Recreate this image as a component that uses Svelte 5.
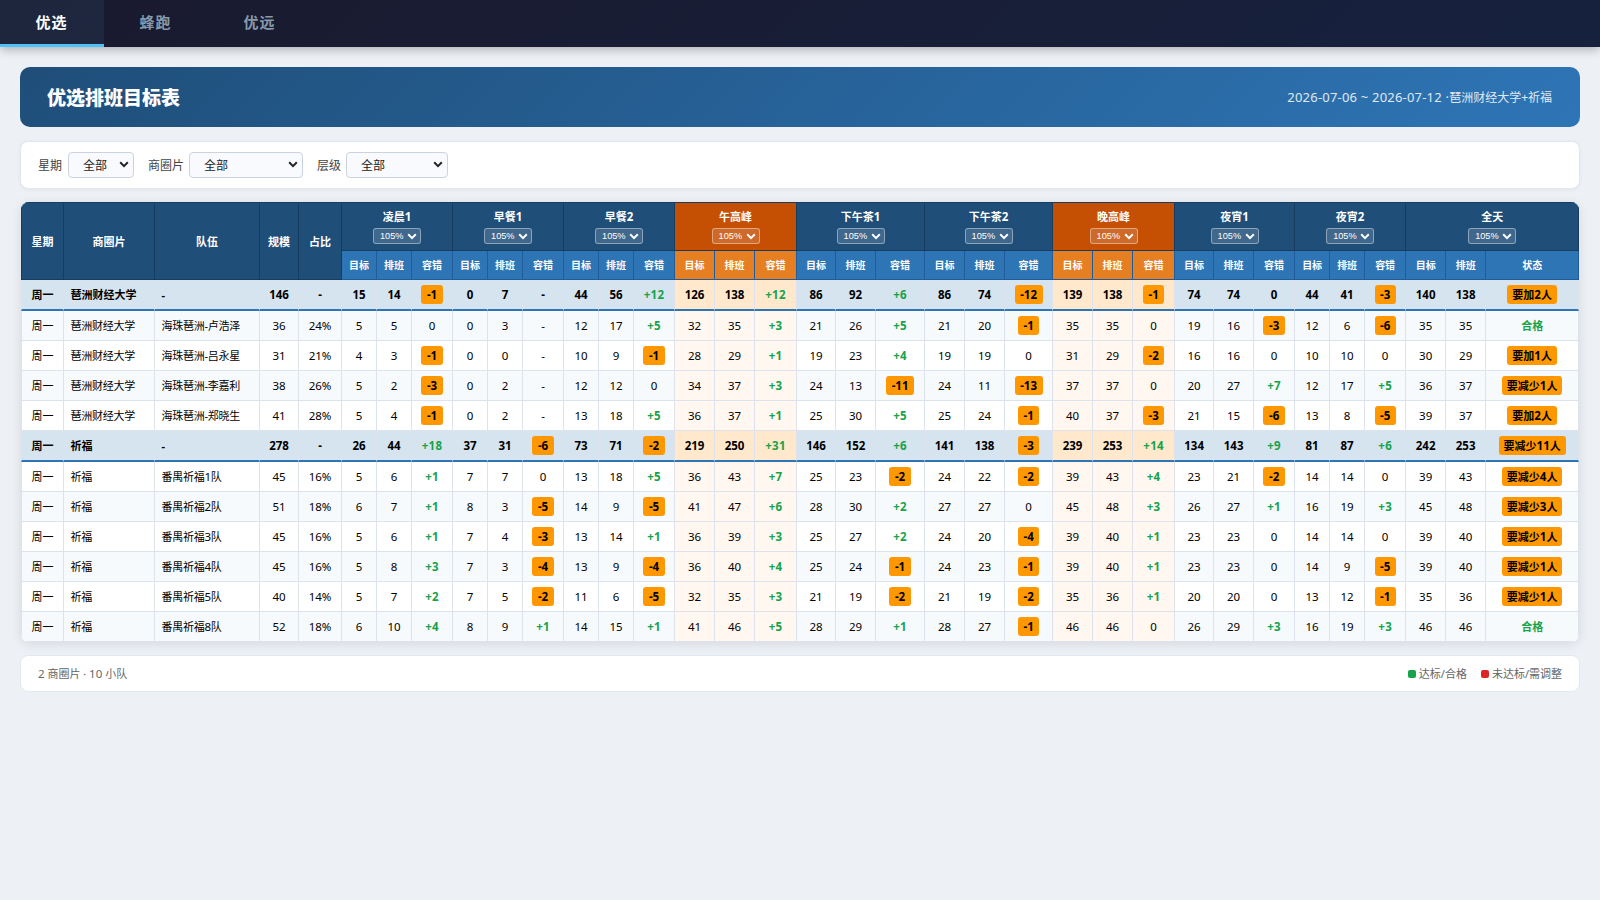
<script>
  const tabs = ['优选', '蜂跑', '优远'];

  const filters = [
    { label: '星期', size: 'sm' },
    { label: '商圈片', size: 'lg' },
    { label: '层级', size: 'md' },
  ];

  const periods = [
    { name: '凌晨1' },
    { name: '早餐1' },
    { name: '早餐2' },
    { name: '午高峰', peak: true },
    { name: '下午茶1' },
    { name: '下午茶2' },
    { name: '晚高峰', peak: true },
    { name: '夜宵1' },
    { name: '夜宵2' },
    { name: '全天', total: true },
  ];

  const widths = [
    42, 91, 105, 39, 43, 35, 35, 41, 35, 35, 41, 35, 35, 41, 40, 40, 42, 39, 40, 49,
    40, 40, 48, 40, 40, 42, 39, 40, 41, 35, 35, 41, 40, 40, 93,
  ];

  // area | team | size | share | target,shift,diff per period | status
  const source = `
琶洲财经大学|-|146|-|15,14,-1 0,7,- 44,56,+12 126,138,+12 86,92,+6 86,74,-12 139,138,-1 74,74,0 44,41,-3 140,138|要加2人
琶洲财经大学|海珠琶洲-卢浩泽|36|24%|5,5,0 0,3,- 12,17,+5 32,35,+3 21,26,+5 21,20,-1 35,35,0 19,16,-3 12,6,-6 35,35|合格
琶洲财经大学|海珠琶洲-吕永星|31|21%|4,3,-1 0,0,- 10,9,-1 28,29,+1 19,23,+4 19,19,0 31,29,-2 16,16,0 10,10,0 30,29|要加1人
琶洲财经大学|海珠琶洲-李嘉利|38|26%|5,2,-3 0,2,- 12,12,0 34,37,+3 24,13,-11 24,11,-13 37,37,0 20,27,+7 12,17,+5 36,37|要减少1人
琶洲财经大学|海珠琶洲-郑晓生|41|28%|5,4,-1 0,2,- 13,18,+5 36,37,+1 25,30,+5 25,24,-1 40,37,-3 21,15,-6 13,8,-5 39,37|要加2人
祈福|-|278|-|26,44,+18 37,31,-6 73,71,-2 219,250,+31 146,152,+6 141,138,-3 239,253,+14 134,143,+9 81,87,+6 242,253|要减少11人
祈福|番禺祈福1队|45|16%|5,6,+1 7,7,0 13,18,+5 36,43,+7 25,23,-2 24,22,-2 39,43,+4 23,21,-2 14,14,0 39,43|要减少4人
祈福|番禺祈福2队|51|18%|6,7,+1 8,3,-5 14,9,-5 41,47,+6 28,30,+2 27,27,0 45,48,+3 26,27,+1 16,19,+3 45,48|要减少3人
祈福|番禺祈福3队|45|16%|5,6,+1 7,4,-3 13,14,+1 36,39,+3 25,27,+2 24,20,-4 39,40,+1 23,23,0 14,14,0 39,40|要减少1人
祈福|番禺祈福4队|45|16%|5,8,+3 7,3,-4 13,9,-4 36,40,+4 25,24,-1 24,23,-1 39,40,+1 23,23,0 14,9,-5 39,40|要减少1人
祈福|番禺祈福5队|40|14%|5,7,+2 7,5,-2 11,6,-5 32,35,+3 21,19,-2 21,19,-2 35,36,+1 20,20,0 13,12,-1 35,36|要减少1人
祈福|番禺祈福8队|52|18%|6,10,+4 8,9,+1 14,15,+1 41,46,+5 28,29,+1 28,27,-1 46,46,0 26,29,+3 16,19,+3 46,46|合格`;

  const rows = source
    .trim()
    .split('\n')
    .map((line) => {
      const [area, team, size, share, values, status] = line.split('|');
      const cells = values.split(' ').flatMap((group, i) =>
        group.split(',').map((value, j) => ({ value, diff: j === 2, peak: periods[i].peak }))
      );
      return { area, team, size, share, cells, status, summary: team === '-' };
    });

  function tone({ value, diff }) {
    if (!diff || value === '-') return '';
    if (value[0] === '+') return 'good';
    return value[0] === '-' ? 'warn' : '';
  }
</script>

{#snippet mixed(text)}
  {#each text.split(/([\d%]+)/) as part}{#if /\d/.test(part)}<span class="num">{part}</span>{:else}{part}{/if}{/each}
{/snippet}

{#snippet chevron()}
  <svg class="chevron" viewBox="0 0 10 7" aria-hidden="true">
    <path d="M1.2 1.3 5 5.1 8.8 1.3" fill="none" stroke="currentColor" stroke-width="2" />
  </svg>
{/snippet}

<nav class="tabs">
  {#each tabs as tab, i}
    <button class="tab" class:active={i === 0}>{tab}</button>
  {/each}
</nav>

<main>
  <header class="hero">
    <h1>优选排班目标表</h1>
    <p><span class="date">2026-07-06 ~ 2026-07-12 · </span>琶洲财经大学+祈福</p>
  </header>

  <section class="filters">
    {#each filters as { label, size }}
      <div class="filter">
        <span>{label}</span>
        <button class="select {size}">全部{@render chevron()}</button>
      </div>
    {/each}
  </section>

  <div class="table-wrap">
    <table>
      <colgroup>
        {#each widths as width, i}
          <col style:width="{i === 0 ? width + 1 : width}px" />
        {/each}
      </colgroup>
      <thead>
        <tr class="head">
          {#each ['星期', '商圈片', '队伍', '规模', '占比'] as title}
            <th class="tall" rowspan="2">{title}</th>
          {/each}
          {#each periods as { name, peak }}
            <th colspan="3" class:peak>
              <div class="period">
                {@render mixed(name)}
              </div>
              <button class="rate">105%{@render chevron()}</button>
            </th>
          {/each}
        </tr>
        <tr class="sub">
          {#each periods as { peak, total }}
            <th class:peak>目标</th>
            <th class:peak>排班</th>
            <th class:peak>{total ? '状态' : '容错'}</th>
          {/each}
        </tr>
      </thead>
      <tbody>
        {#each rows as row}
          <tr class:summary={row.summary}>
            <td>周一</td>
            <td class="left">{row.area}</td>
            <td class="left">{@render mixed(row.team)}</td>
            <td><span class="num">{row.size}</span></td>
            <td><span class="num">{row.share}</span></td>
            {#each row.cells as cell}
              <td class:peak={cell.peak}><span class="num {tone(cell)}">{cell.value}</span></td>
            {/each}
            <td>
              <span class={row.status === '合格' ? 'good' : 'warn'}>{@render mixed(row.status)}</span>
            </td>
          </tr>
        {/each}
      </tbody>
    </table>
  </div>

  <footer>
    <span>{@render mixed('2 商圈片 · 10 小队')}</span>
    <div class="legend">
      <span><i class="ok"></i>达标/合格</span>
      <span><i class="bad"></i>未达标/需调整</span>
    </div>
  </footer>
</main>

<style>
  :global(body) {
    background: #edf0f5;
    font-family: 'Noto Sans', 'Noto Sans CJK SC', sans-serif;
    font-size: 12px;
    color: #000;
  }

  button {
    font-family: inherit;
    margin: 0;
  }

  .tabs {
    display: flex;
    height: 47px;
    background: linear-gradient(135deg, #1a1a2e, #16213e);
    box-shadow: 0 2px 10px rgba(0, 0, 0, 0.3);
  }

  .tab {
    box-sizing: border-box;
    width: 104px;
    padding: 0 1px 2px 0;
    border: 0;
    border-bottom: 3px solid transparent;
    background: none;
    color: #8899aa;
    font-size: 15px;
    font-weight: 600;
    letter-spacing: 1px;
  }

  .tab.active {
    color: #fff;
    background: rgba(79, 195, 247, 0.08);
    border-bottom-color: #4fc3f7;
  }

  main {
    padding: 20px;
  }

  .hero {
    display: flex;
    align-items: center;
    justify-content: space-between;
    height: 60px;
    padding: 0 28px 0 27px;
    border-radius: 10px;
    background: linear-gradient(135deg, #1f4e79, #2e75b6);
    color: #fff;
  }

  h1 {
    margin: 0;
    font-size: 19px;
    font-weight: 900;
  }

  .hero p {
    margin: 0;
    opacity: 0.85;
  }

  .date {
    font-size: 13px;
    letter-spacing: 0.2px;
    white-space: pre;
  }

  .filters,
  footer {
    display: flex;
    align-items: center;
    box-sizing: border-box;
    background: #fff;
    border: 1px solid #e2e8f0;
    border-radius: 8px;
    padding: 0 17px;
  }

  .filters {
    height: 48px;
    margin-top: 14px;
    gap: 14px;
    color: #444;
    box-shadow: 0 1px 4px rgba(0, 0, 0, 0.05);
  }

  .filter {
    display: flex;
    align-items: center;
    gap: 5px;
  }

  .filter:first-child {
    gap: 6px;
  }

  .select {
    display: flex;
    align-items: center;
    justify-content: space-between;
    box-sizing: border-box;
    height: 26px;
    padding: 0 4px 1px 14px;
    border: 1px solid #ccd3e0;
    border-radius: 4px;
    background: #f9fafd;
    color: #222;
    font-size: 12px;
  }

  .select.sm {
    width: 66px;
  }

  .select.lg {
    width: 114px;
  }

  .select.md {
    width: 102px;
  }

  .chevron {
    width: 10px;
    height: 7px;
    flex-shrink: 0;
  }

  .table-wrap {
    width: 1558px;
    margin: 13px 0 0 1px;
    overflow: hidden;
    border-radius: 8px;
    box-shadow: 0 2px 12px rgba(0, 0, 0, 0.1);
  }

  table {
    width: 1558px;
    table-layout: fixed;
    border-collapse: separate;
    border-spacing: 0;
    background: #fff;
    font-size: 11px;
    line-height: 16px;
  }

  th,
  td {
    box-sizing: border-box;
    padding: 0;
    text-align: center;
    white-space: nowrap;
    border: 0 solid #dde3ec;
    border-width: 0 1px 1px 0;
  }

  tr > :first-child:not(.sub > *) {
    border-left-width: 1px;
  }

  .head th {
    height: 49px;
    border-color: #163d5f;
    border-top-width: 1px;
    background: #1f4e79;
    color: #fff;
  }

  .head th.tall {
    padding-top: 2px;
  }

  .head th.peak {
    background: #c55004;
  }

  .period {
    height: 16px;
    margin-bottom: 3px;
  }

  .rate {
    display: inline-flex;
    align-items: center;
    justify-content: space-between;
    box-sizing: border-box;
    width: 48px;
    height: 16px;
    padding: 0 3px 0 6px;
    border: 1px solid rgba(255, 255, 255, 0.4);
    border-radius: 3px;
    background: rgba(255, 255, 255, 0.15);
    color: #fff;
    font: 9.2px 'Liberation Sans', sans-serif;
    vertical-align: top;
  }

  .sub th {
    height: 29px;
    border-color: #1f5c99;
    background: #2e75b6;
    color: #fff;
    font-size: 10px;
  }

  .sub th.peak {
    background: #e67e22;
  }

  td {
    height: 30px;
  }

  tbody tr:nth-child(even) td {
    background: #f7fafd;
  }

  tbody td.peak,
  tbody tr:nth-child(even) td.peak {
    background: #fff7f0;
  }

  tbody .summary td,
  tbody tr.summary:nth-child(even) td {
    height: 31px;
    border-bottom: 2px solid #2e75b6;
    background: #d6e4ef;
    font-weight: 700;
  }

  tbody .summary td.peak,
  tbody tr.summary:nth-child(even) td.peak {
    background: #ffe8cc;
  }

  td.left {
    padding-left: 6.5px;
    text-align: left;
    letter-spacing: -0.25px;
  }

  .summary td.left {
    letter-spacing: 0;
  }

  .num {
    font-size: 11.5px;
  }

  .good {
    color: #16a34a;
    font-weight: 700;
  }

  .num.good {
    letter-spacing: 0.3px;
  }

  .warn {
    display: inline-block;
    height: 19px;
    padding: 0 5px;
    border-radius: 3px;
    background: #ff9800;
    font-weight: 700;
    line-height: 19px;
    vertical-align: middle;
  }

  .num.warn {
    padding: 0 5.5px;
  }

  footer {
    justify-content: space-between;
    height: 37px;
    margin-top: 13px;
    padding-bottom: 1px;
    font-size: 11px;
    color: #666;
  }

  .legend {
    display: flex;
    gap: 14px;
  }

  .legend i {
    display: inline-block;
    width: 8px;
    height: 8px;
    margin-right: 3px;
    border-radius: 2px;
  }

  .ok {
    background: #16a34a;
  }

  .bad {
    background: #dc2626;
  }
</style>
